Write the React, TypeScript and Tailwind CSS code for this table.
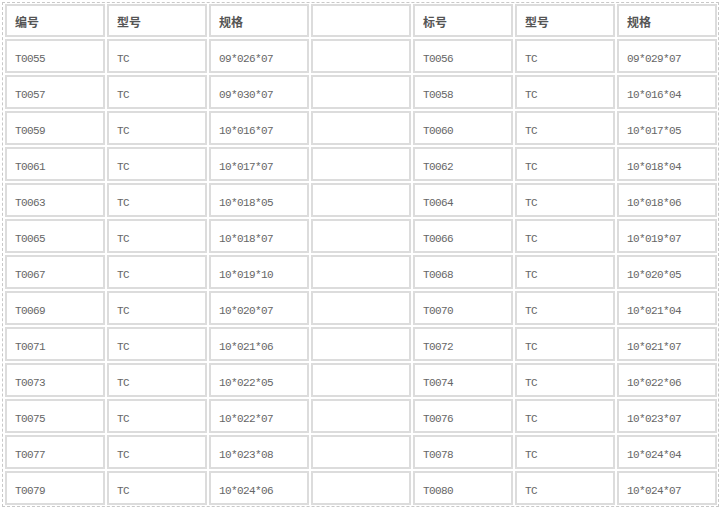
import React from "react";

const rows: string[][] = [
  ["T0055", "TC", "09*026*07", "", "T0056", "TC", "09*029*07"],
  ["T0057", "TC", "09*030*07", "", "T0058", "TC", "10*016*04"],
  ["T0059", "TC", "10*016*07", "", "T0060", "TC", "10*017*05"],
  ["T0061", "TC", "10*017*07", "", "T0062", "TC", "10*018*04"],
  ["T0063", "TC", "10*018*05", "", "T0064", "TC", "10*018*06"],
  ["T0065", "TC", "10*018*07", "", "T0066", "TC", "10*019*07"],
  ["T0067", "TC", "10*019*10", "", "T0068", "TC", "10*020*05"],
  ["T0069", "TC", "10*020*07", "", "T0070", "TC", "10*021*04"],
  ["T0071", "TC", "10*021*06", "", "T0072", "TC", "10*021*07"],
  ["T0073", "TC", "10*022*05", "", "T0074", "TC", "10*022*06"],
  ["T0075", "TC", "10*022*07", "", "T0076", "TC", "10*023*07"],
  ["T0077", "TC", "10*023*08", "", "T0078", "TC", "10*024*04"],
  ["T0079", "TC", "10*024*06", "", "T0080", "TC", "10*024*07"],
];

const headers = ["编号", "型号", "规格", "", "标号", "型号", "规格"];

export default function App() {
  return (
    <div className="w-[721px] h-[509px] bg-white overflow-hidden">
      <div className="ml-[2px] mt-[2px] w-[717px] border border-dashed border-[#c8c8c8] px-[2px] pt-[1px] pb-[1px]">
        <div className="grid grid-cols-[repeat(7,100px)] gap-[2px]">
          {headers.map((h, i) => (
            <div
              key={"h" + i}
              className="h-[33px] border-2 border-[#dcdcdc] flex items-center pl-[8px] pt-[3px] text-[12px] font-bold text-[#555]"
              style={{ fontFamily: '"Noto Sans CJK SC", "Noto Sans", sans-serif' }}
            >
              {h}
            </div>
          ))}
          {rows.map((r, ri) =>
            r.map((c, ci) => (
              <div
                key={ri + "-" + ci}
                className="h-[34px] border-2 border-[#dcdcdc] flex items-center pl-[8px] pt-[6px] text-[11px] tracking-[-0.6px] text-[#666] font-['Liberation_Mono',monospace]"
              >
                {c}
              </div>
            ))
          )}
        </div>
      </div>
    </div>
  );
}
